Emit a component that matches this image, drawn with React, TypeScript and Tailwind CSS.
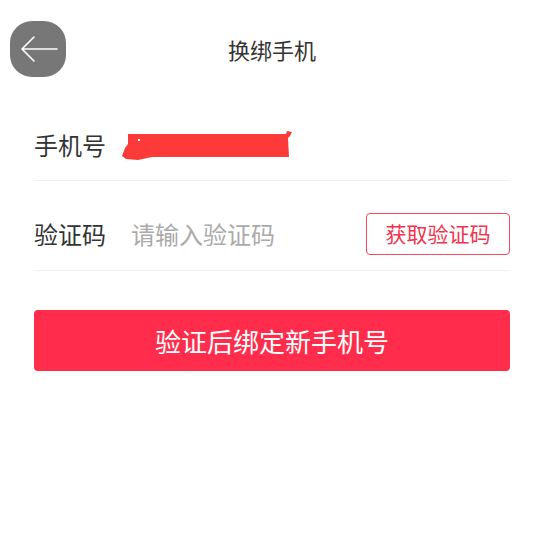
const font = {
  fontFamily: '"Noto Sans CJK SC", "Noto Sans", sans-serif',
};

function BackButton() {
  return (
    <button className="absolute left-[10px] top-[21px] flex h-[56px] w-[56px] items-center justify-center rounded-[22px] bg-[#777777]">
      <svg width="56" height="56" viewBox="0 0 56 56" fill="none">
        <path
          d="M47 28H12M24 16L12 28L24 40"
          stroke="#ffffff"
          strokeWidth="1.6"
          strokeLinecap="round"
          strokeLinejoin="round"
        />
      </svg>
    </button>
  );
}

function Scribble() {
  return (
    <svg width="172" height="32" viewBox="0 0 172 32">
      <path
        d="M6 5 L164 5 L165 2 L170 3 L168 7 L166 9 L167 28 L30 28 L16 31 L4 30 L0 27 L3 19 L6 15 Z"
        fill="#fc3a3a"
      />
      <rect x="16" y="10" width="2" height="2" fill="#ffffff" />
    </svg>
  );
}

export default function App() {
  return (
    <main className="relative min-h-screen bg-white" style={font}>
      <BackButton />
      <div className="flex h-[109px] justify-center pt-[33px]">
        <h1 className="text-[22px] leading-[32px] text-[#333333]">换绑手机</h1>
      </div>

      <div className="px-[34px]">
        <div className="flex h-[72px] items-center border-b border-[#f0f0f0]">
          <span className="w-[88px] text-[24px] text-[#333333]">手机号</span>
          <Scribble />
        </div>

        <div className="mt-[17px] flex h-[73px] items-center border-b border-[#f0f0f0] pb-[1px]">
          <span className="w-[97px] text-[24px] text-[#333333]">验证码</span>
          <input
            placeholder="请输入验证码"
            className="w-[200px] flex-1 text-[24px] text-[#333333] outline-none placeholder:text-[#aaaaaa]"
          />
          <button className="h-[42px] w-[144px] rounded-[4px] border border-[#f04a5e] text-[21px] text-[#f3334d]">
            获取验证码
          </button>
        </div>

        <button className="mt-[39px] h-[61px] w-full rounded-[4px] bg-[#ff2d4b] text-[26px] text-white">
          验证后绑定新手机号
        </button>
      </div>
    </main>
  );
}
